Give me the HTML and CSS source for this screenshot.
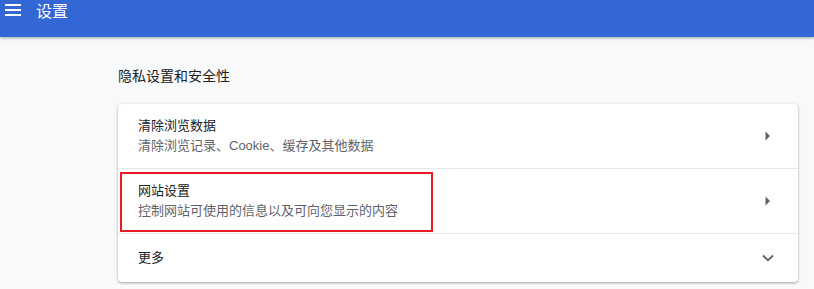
FILE: index.html
```html
<!DOCTYPE html>
<html lang="zh-CN">
<head>
<meta charset="utf-8">
<title>设置</title>
<link rel="stylesheet" href="styles.css">
</head>
<body>
<header class="topbar">
  <svg class="menu-icon" width="16" height="12" viewBox="0 0 16 12" aria-hidden="true">
    <rect x="0" y="0" width="16" height="2" fill="#fff"/>
    <rect x="0" y="5" width="16" height="2" fill="#fff"/>
    <rect x="0" y="10" width="16" height="2" fill="#fff"/>
  </svg>
  <h1 class="topbar-title">设置</h1>
</header>
<main class="main">
  <h2 class="section-title">隐私设置和安全性</h2>
  <div class="card">
    <div class="row">
      <div class="row-text">
        <div class="primary">清除浏览数据</div>
        <div class="secondary">清除浏览记录、Cookie、缓存及其他数据</div>
      </div>
      <span class="icon-box">
        <svg width="6" height="10" viewBox="0 0 6 10" aria-hidden="true"><path d="M0.5 0.5 L5 5 L0.5 9.5 Z" fill="#5f6368"/></svg>
      </span>
    </div>
    <div class="row highlighted">
      <div class="row-text">
        <div class="primary">网站设置</div>
        <div class="secondary">控制网站可使用的信息以及可向您显示的内容</div>
      </div>
      <span class="icon-box">
        <svg width="6" height="10" viewBox="0 0 6 10" aria-hidden="true"><path d="M0.5 0.5 L5 5 L0.5 9.5 Z" fill="#5f6368"/></svg>
      </span>
      <span class="red-outline"></span>
    </div>
    <div class="row short">
      <div class="row-text">
        <div class="primary">更多</div>
      </div>
      <span class="icon-box">
        <svg width="12" height="8" viewBox="0 0 12 8" aria-hidden="true"><path d="M1 1.5 L6 6.2 L11 1.5" fill="none" stroke="#5f6368" stroke-width="1.8"/></svg>
      </span>
    </div>
  </div>
</main>
</body>
</html>
```
FILE: styles.css
```css
html, body {
  margin: 0;
  padding: 0;
}
body {
  background: #f8f9fa;
  font-family: "Liberation Sans", "Noto Sans CJK SC", sans-serif;
  color: #202124;
  width: 814px;
  height: 289px;
  overflow: hidden;
}
.topbar {
  height: 37px;
  background: #3367d6;
  display: flex;
  align-items: flex-start;
  box-shadow: 0 1px 3px rgba(0, 0, 0, 0.35);
  position: relative;
  z-index: 1;
}
.menu-icon {
  display: block;
  margin: 4px 0 0 5px;
}
.topbar-title {
  margin: 0 0 0 15px;
  font-size: 16px;
  font-weight: normal;
  line-height: 24px;
  color: #fff;
}
.main {
  padding: 29px 16px 0 118px;
}
.section-title {
  margin: 0 0 18px 0;
  font-size: 14px;
  font-weight: normal;
  line-height: 20px;
  color: #202124;
}
.card {
  background: #fff;
  border-radius: 4px;
  box-shadow: 0 1px 2px rgba(60, 64, 67, 0.3), 0 1px 3px 1px rgba(60, 64, 67, 0.12);
}
.row {
  position: relative;
  display: flex;
  align-items: center;
  min-height: 64px;
  padding: 0 20px;
  border-bottom: 1px solid #e8e8e8;
}
.row.short {
  min-height: 48px;
  border-bottom: none;
}
.row-text {
  flex: 1;
}
.primary {
  font-size: 13px;
  line-height: 20px;
  color: #202124;
}
.secondary {
  font-size: 13px;
  line-height: 20px;
  color: #5f6368;
}
.icon-box {
  width: 20px;
  height: 20px;
  display: flex;
  align-items: center;
  justify-content: center;
}
.red-outline {
  position: absolute;
  left: 2px;
  top: 3px;
  width: 309px;
  height: 56px;
  border: 2px solid #e81c24;
}
```
